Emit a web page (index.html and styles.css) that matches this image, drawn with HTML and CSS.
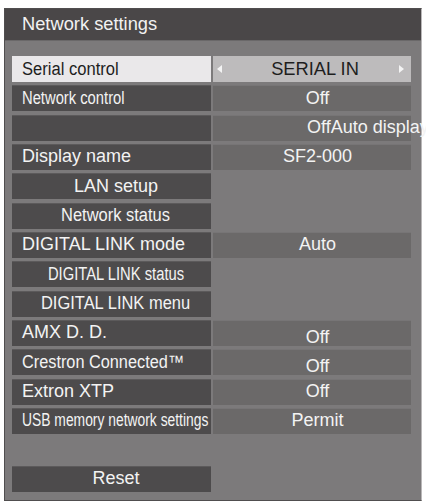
FILE: index.html
```html
<!DOCTYPE html>
<html>
<head>
<meta charset="utf-8">
<link rel="stylesheet" href="styles.css">
</head>
<body>
<div class="panel">
  <div class="header">Network settings</div>
  <div class="rows">
    <div class="label sel"><span class="t s92">Serial control</span></div>
    <div class="value sel">
      <span class="arrow left"></span>
      <span class="vt">SERIAL IN</span>
      <span class="arrow right"></span>
    </div>

    <div class="label"><span class="t s82">Network control</span></div>
    <div class="value"><span class="vt">Off</span></div>

    <div class="label"></div>
    <div class="value overflow"><span class="vt">OffAuto display</span></div>

    <div class="label"><span class="t">Display name</span></div>
    <div class="value"><span class="vt">SF2-000</span></div>

    <div class="label center"><span class="t">LAN setup</span></div>
    <div class="empty"></div>

    <div class="label center"><span class="t s92c">Network status</span></div>
    <div class="empty"></div>

    <div class="label"><span class="t">DIGITAL LINK mode</span></div>
    <div class="value"><span class="vt">Auto</span></div>

    <div class="label center"><span class="t s82c">DIGITAL LINK status</span></div>
    <div class="empty"></div>

    <div class="label center"><span class="t s92c">DIGITAL LINK menu</span></div>
    <div class="empty"></div>

    <div class="label"><span class="t">AMX D. D.</span></div>
    <div class="value low"><span class="vt">Off</span></div>

    <div class="label"><span class="t s90">Crestron Connected™</span></div>
    <div class="value low"><span class="vt">Off</span></div>

    <div class="label"><span class="t">Extron XTP</span></div>
    <div class="value"><span class="vt">Off</span></div>

    <div class="label"><span class="t s77">USB memory network settings</span></div>
    <div class="value"><span class="vt">Permit</span></div>
  </div>
  <div class="rows reset-row">
    <div class="label center"><span class="t">Reset</span></div>
    <div class="empty"></div>
  </div>
</div>
</body>
</html>
```
FILE: styles.css
```css
html, body {
  margin: 0;
  padding: 0;
  background: #ffffff;
}

body {
  font-family: "Liberation Sans", Arial, sans-serif;
  width: 426px;
  height: 503px;
  overflow: hidden;
}

.panel {
  box-sizing: border-box;
  margin: 8px 0 0 4px;
  width: 418px;
  height: 493px;
  background: #7c7a7b;
  border: 1px solid #504e4f;
  border-right-color: #b9b7b8;
}

.header {
  box-sizing: border-box;
  height: 32px;
  background: #4a4748;
  color: #f2f2f2;
  font-size: 18.3px;
  line-height: 30px;
  padding-left: 17px;
  border-bottom: 1px solid #6a6869;
}

.rows {
  display: grid;
  grid-template-columns: 199px 198px;
  grid-auto-rows: 26px;
  column-gap: 2px;
  row-gap: 3.33px;
  padding: 15px 0 0 7px;
}

.reset-row {
  padding-top: 32px;
}

.label {
  display: flex;
  align-items: center;
  background: #4d4b4c;
  color: #f3f3f3;
  font-size: 18px;
  padding-left: 10px;
  white-space: nowrap;
  box-shadow: inset 0 1px 0 #5c5a5b;
}

.label.center {
  justify-content: center;
  padding-left: 9px;
}

.t {
  display: inline-block;
  transform-origin: left center;
}

.center .t {
  transform-origin: center center;
}

.s92 { transform: scaleX(0.92); }
.s82 { transform: scaleX(0.82); }
.s90 { transform: scaleX(0.905); }
.s77 { transform: scaleX(0.77); }
.s92c { transform: scaleX(0.915); }
.s82c { transform: scaleX(0.82); }

.value {
  display: flex;
  align-items: center;
  justify-content: center;
  background: #6b6969;
  color: #f3f3f3;
  font-size: 18px;
  padding-left: 11px;
  white-space: nowrap;
  box-shadow: inset 0 1px 0 #777576;
}

.value.low {
  align-items: flex-start;
  padding-top: 7px;
  box-sizing: border-box;
}

.value.overflow {
  justify-content: flex-start;
  padding-left: 94px;
  overflow: visible;
}

.empty {
  background: transparent;
}

.label.sel {
  background: #eae8ea;
  color: #1e1e1e;
  box-shadow: none;
}

.value.sel {
  background: #bdbbbc;
  color: #1e1e1e;
  justify-content: space-between;
  padding: 0 7px 0 4px;
  box-shadow: none;
}

.value.sel .vt {
  font-size: 18.3px;
  padding-left: 9px;
}

.arrow {
  width: 0;
  height: 0;
  border-top: 4px solid transparent;
  border-bottom: 4px solid transparent;
}

.arrow.left {
  border-right: 5px solid #f4f4f4;
}

.arrow.right {
  border-left: 5px solid #f4f4f4;
}
```
